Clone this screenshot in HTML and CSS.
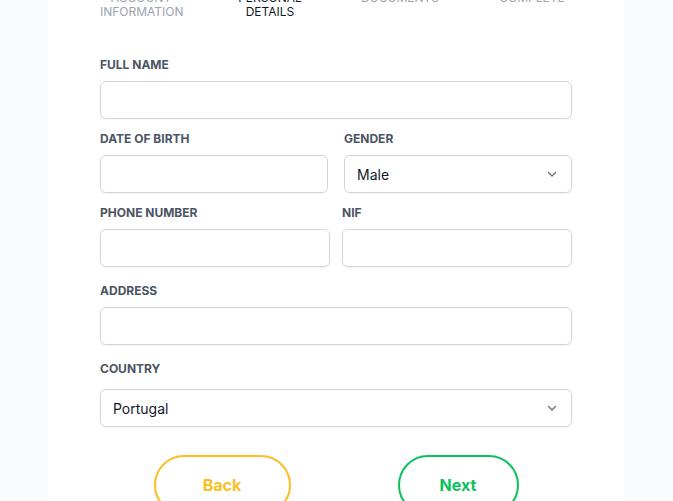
FILE: index.html
```html
<!DOCTYPE html>
<html lang="en">
<head>
<meta charset="utf-8">
<title>Personal Details</title>
<link rel="stylesheet" href="styles.css">
</head>
<body>
<main class="card">
  <ol class="steps">
    <li class="step">Account<br>Information</li>
    <li class="step step-active">Personal<br>Details</li>
    <li class="step">Documents</li>
    <li class="step step-last">Complete</li>
  </ol>

  <form class="form">
    <div class="field">
      <label class="label" for="fullname">Full Name</label>
      <input class="input" id="fullname" type="text">
    </div>

    <div class="row row-wide">
      <div class="field">
        <label class="label" for="dob">Date of Birth</label>
        <input class="input" id="dob" type="text">
      </div>
      <div class="field">
        <label class="label" for="gender">Gender</label>
        <div class="select-wrap">
          <select class="input select" id="gender">
            <option>Male</option>
            <option>Female</option>
          </select>
          <svg class="chevron" width="12" height="12" viewBox="0 0 12 12" aria-hidden="true"><path d="M2.5 4.5 L6 8 L9.5 4.5" fill="none" stroke="#6b7280" stroke-width="1.4" stroke-linecap="round" stroke-linejoin="round"/></svg>
        </div>
      </div>
    </div>

    <div class="row row-narrow">
      <div class="field">
        <label class="label" for="phone">Phone Number</label>
        <input class="input" id="phone" type="text">
      </div>
      <div class="field">
        <label class="label" for="nif">NIF</label>
        <input class="input" id="nif" type="text">
      </div>
    </div>

    <div class="field field-address">
      <label class="label" for="address">Address</label>
      <input class="input" id="address" type="text">
    </div>

    <div class="field field-country">
      <label class="label label-country" for="country">Country</label>
      <div class="select-wrap">
        <select class="input select" id="country">
          <option>Portugal</option>
          <option>Spain</option>
        </select>
        <svg class="chevron" width="12" height="12" viewBox="0 0 12 12" aria-hidden="true"><path d="M2.5 4.5 L6 8 L9.5 4.5" fill="none" stroke="#6b7280" stroke-width="1.4" stroke-linecap="round" stroke-linejoin="round"/></svg>
      </div>
    </div>

    <div class="actions">
      <button type="button" class="btn btn-back">Back</button>
      <button type="button" class="btn btn-next">Next</button>
    </div>
  </form>
</main>
</body>
</html>
```

FILE: styles.css
```css
html {
  overflow: hidden;
}
body {
  margin: 0;
  background: #f9fafb;
  font-family: Inter, "Liberation Sans", sans-serif;
  color: #111827;
}
.card {
  width: 576px;
  margin: -9px 0 0 48px;
  background: #ffffff;
  padding: 0 52px 60px;
  box-sizing: border-box;
  min-height: 560px;
}
.steps {
  list-style: none;
  margin: 0;
  padding: 0;
  display: grid;
  grid-template-columns: 82px 176px 84px 130px;
}
.step {
  font-size: 12px;
  line-height: 14px;
  text-transform: uppercase;
  text-align: center;
  white-space: nowrap;
  color: #9ca3af;
}
.step-active {
  color: #111827;
}
.step-last {
  padding-left: 50px;
}
.form {
  margin-top: 38px;
  display: flex;
  flex-direction: column;
}
.field {
  display: flex;
  flex-direction: column;
  margin-bottom: 12px;
}
.label {
  font-size: 12px;
  line-height: 16px;
  font-weight: 700;
  text-transform: uppercase;
  color: #4b5563;
  margin-bottom: 8px;
}
.label-country {
  margin-bottom: 12px;
}
.field-address {
  margin-top: 4px;
  margin-bottom: 16px;
}
.input {
  height: 38px;
  box-sizing: border-box;
  width: 100%;
  border: 1px solid #d1d5db;
  border-radius: 6px;
  background: #ffffff;
  box-shadow: 0 1px 2px rgba(0, 0, 0, 0.04);
  font-family: Inter, "Liberation Sans", sans-serif;
  font-size: 14px;
  color: #111827;
  padding: 0 12px;
  margin: 0;
  outline: none;
}
.select {
  appearance: none;
  -webkit-appearance: none;
  padding-right: 36px;
}
.select-wrap {
  position: relative;
}
.chevron {
  position: absolute;
  right: 14px;
  top: 13px;
  pointer-events: none;
}
.row {
  display: grid;
  grid-template-columns: 1fr 1fr;
}
.row-wide {
  column-gap: 16px;
}
.row-narrow {
  column-gap: 12px;
}
.actions {
  margin-top: 16px;
  display: flex;
  justify-content: space-around;
}
.btn {
  height: 60px;
  border-radius: 30px;
  background: #ffffff;
  border: 2px solid;
  font-family: Inter, "Liberation Sans", sans-serif;
  font-size: 16px;
  font-weight: 700;
  box-shadow: 0 2px 6px rgba(0, 0, 0, 0.06);
  cursor: pointer;
}
.btn-back {
  width: 137px;
  color: #fbbf24;
  border-color: #fbbf24;
}
.btn-next {
  width: 121px;
  color: #0cc05c;
  border-color: #0cc05c;
}
```
